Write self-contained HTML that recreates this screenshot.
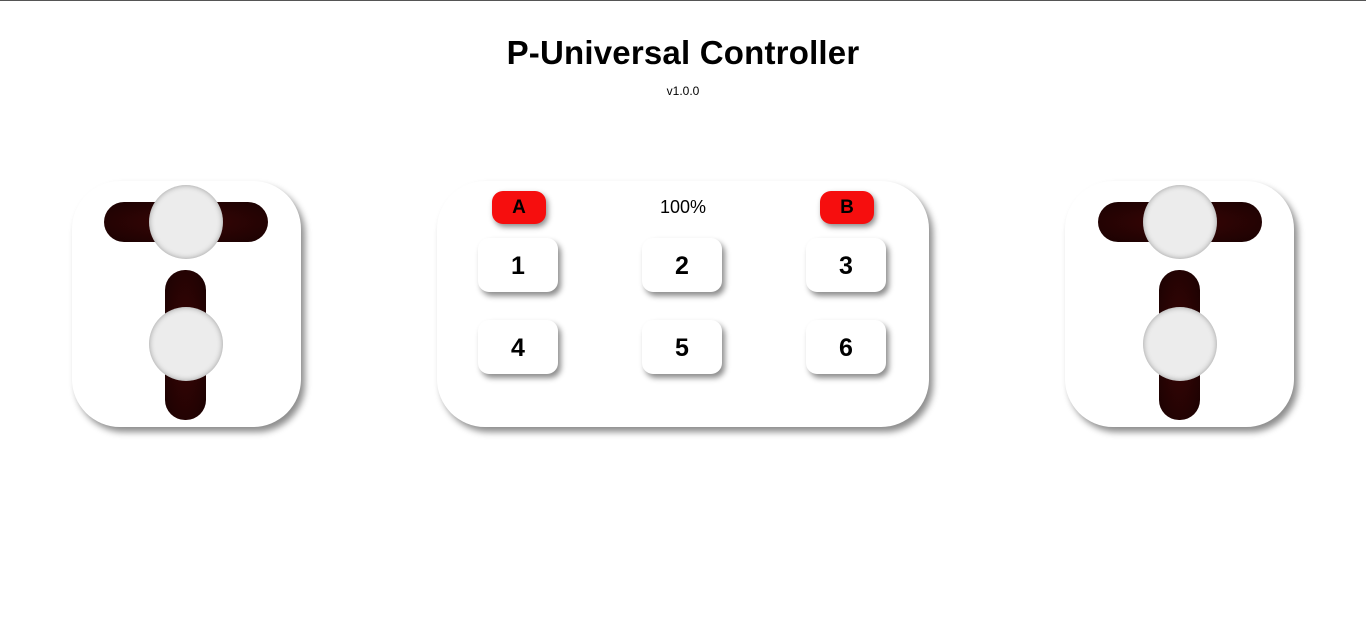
<!DOCTYPE html>
<html><head><meta charset="utf-8"><style>
body{margin:0;width:1366px;height:618px;background:#fff;font-family:"Liberation Sans",sans-serif;position:relative;overflow:hidden}
.a{position:absolute}
h1{position:absolute;left:0;width:1366px;top:34px;margin:0;text-align:center;font-size:33px;letter-spacing:0.2px;font-weight:bold;color:#000}
.v{left:0;width:1366px;top:84px;text-align:center;font-size:12px}
.panel{background:#fff;border-radius:48px;box-shadow:4px 5px 7px rgba(0,0,0,.45)}
.tr{background:radial-gradient(ellipse at center,#3a0505,#1a0202);border-radius:20px}
.k{width:74px;height:74px;border-radius:50%;background:#ececec;box-shadow:inset 0 0 6px rgba(0,0,0,.35)}
.b{width:80px;height:54px;border-radius:11px;background:#fff;box-shadow:3px 4px 6px rgba(0,0,0,.45);font-weight:bold;font-size:25px;text-align:center;line-height:56px}
.r{width:54px;height:33px;border-radius:11px;background:#f60e0e;box-shadow:2px 3px 6px rgba(0,0,0,.45);font-weight:bold;font-size:19px;text-align:center;line-height:34px}
</style></head><body>
<div class="a" style="left:0;top:0;width:1366px;height:1px;background:#555"></div>
<h1>P-Universal Controller</h1>
<div class="a v">v1.0.0</div>

<div class="a panel" style="left:72px;top:181px;width:229px;height:246px"></div>
<div class="a tr" style="left:104px;top:202px;width:164px;height:40px"></div>
<div class="a tr" style="left:165px;top:270px;width:41px;height:150px"></div>
<div class="a k" style="left:149px;top:185px"></div>
<div class="a k" style="left:149px;top:307px"></div>

<div class="a panel" style="left:437px;top:181px;width:492px;height:246px"></div>
<div class="a r" style="left:492px;top:191px">A</div>
<div class="a r" style="left:820px;top:191px">B</div>
<div class="a" style="left:633px;width:100px;top:197px;text-align:center;font-size:18px">100%</div>
<div class="a b" style="left:478px;top:238px">1</div>
<div class="a b" style="left:642px;top:238px">2</div>
<div class="a b" style="left:806px;top:238px">3</div>
<div class="a b" style="left:478px;top:320px">4</div>
<div class="a b" style="left:642px;top:320px">5</div>
<div class="a b" style="left:806px;top:320px">6</div>

<div class="a panel" style="left:1065px;top:181px;width:229px;height:246px"></div>
<div class="a tr" style="left:1098px;top:202px;width:164px;height:40px"></div>
<div class="a tr" style="left:1159px;top:270px;width:41px;height:150px"></div>
<div class="a k" style="left:1143px;top:185px"></div>
<div class="a k" style="left:1143px;top:307px"></div>
</body></html>
